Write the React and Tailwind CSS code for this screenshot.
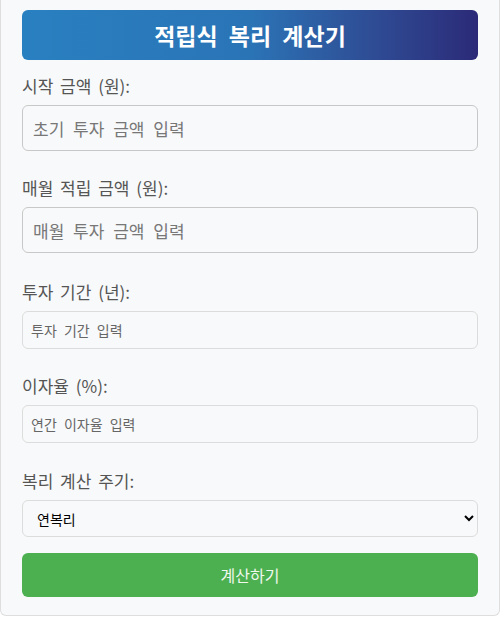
import React, { useState } from "react";

const Field = ({ label, placeholder, big, value, onChange, className }) => (
  <div className={className}>
    <label className="block text-[17px] leading-6 text-[#555] mb-[7px] [word-spacing:3px]">
      {label}
    </label>
    <input
      type="number"
      value={value}
      onChange={(e) => onChange(e.target.value)}
      placeholder={placeholder}
      className={`block w-full rounded-md bg-[#f8f9fa] outline-none ${
        big
          ? "h-[46px] px-[10px] text-[17px] border border-[#c8c8c8] placeholder:text-[#777] [word-spacing:5px]"
          : "h-[38px] px-[8px] text-[14px] border border-[#dcdcdc] placeholder:text-[#666] [word-spacing:4px]"
      }`}
    />
  </div>
);

const App = () => {
  const [start, setStart] = useState("");
  const [monthly, setMonthly] = useState("");
  const [years, setYears] = useState("");
  const [rate, setRate] = useState("");
  const [period, setPeriod] = useState("1");

  return (
    <div
      className="min-h-screen bg-white"
      style={{ fontFamily: '"Noto Sans CJK KR", "Noto Sans", sans-serif' }}
    >
      <div className="bg-[#f8f9fa] border-x border-b border-[#dedede] rounded-b-md px-[21px] pt-[10px] pb-[18px]">
        <h1 className="h-[50px] flex items-center justify-center rounded-md bg-gradient-to-r from-[#2980c0] via-[#2a74b6] to-[#2b2a78] text-white text-[23px] font-bold [word-spacing:6px]">
          적립식 복리 계산기
        </h1>

        <Field
          className="mt-[14px]"
          label="시작 금액 (원):"
          placeholder="초기 투자 금액 입력"
          big
          value={start}
          onChange={setStart}
        />
        <Field
          className="mt-[25px]"
          label="매월 적립 금액 (원):"
          placeholder="매월 투자 금액 입력"
          big
          value={monthly}
          onChange={setMonthly}
        />
        <Field
          className="mt-[27px]"
          label="투자 기간 (년):"
          placeholder="투자 기간 입력"
          value={years}
          onChange={setYears}
        />
        <Field
          className="mt-[25px]"
          label="이자율 (%):"
          placeholder="연간 이자율 입력"
          value={rate}
          onChange={setRate}
        />
        <div className="mt-[26px]">
          <label className="block text-[17px] leading-6 text-[#555] mb-[7px] [word-spacing:3px]">
            복리 계산 주기:
          </label>
          <select
            value={period}
            onChange={(e) => setPeriod(e.target.value)}
            className="block w-full h-[37px] rounded-md border border-[#dcdcdc] bg-[#f8f9fa] px-[10px] text-[14px] text-black outline-none"
          >
            <option value="1">연복리</option>
            <option value="2">반기복리</option>
            <option value="4">분기복리</option>
            <option value="12">월복리</option>
          </select>
        </div>

        <button className="mt-[16px] w-full h-[44px] rounded-md bg-[#4caf50] text-[#f0f8ee] text-[16px] [word-spacing:3px]">
          계산하기
        </button>
      </div>
    </div>
  );
};

export default App;
